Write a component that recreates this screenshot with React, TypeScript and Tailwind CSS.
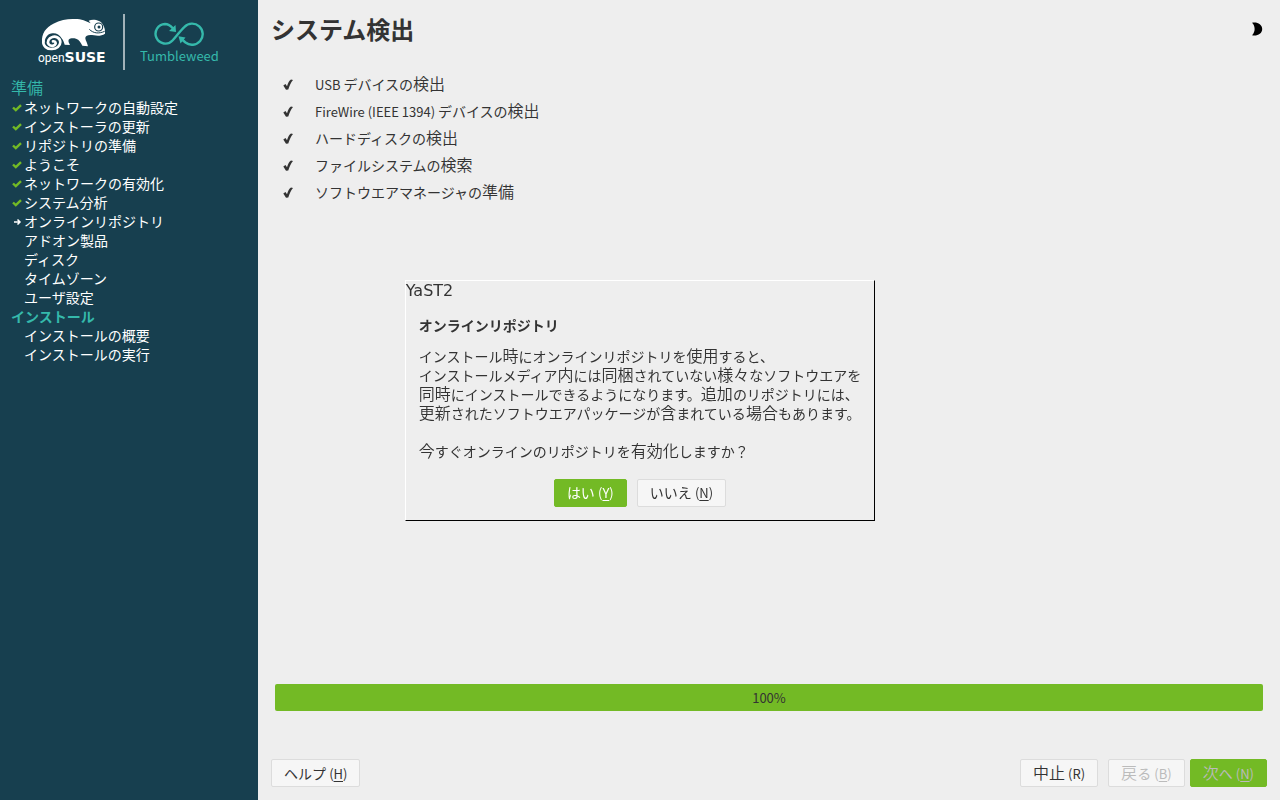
type StepState = "done" | "current" | "todo";

const preparation: { label: string; state: StepState }[] = [
  { label: "ネットワークの自動設定", state: "done" },
  { label: "インストーラの更新", state: "done" },
  { label: "リポジトリの準備", state: "done" },
  { label: "ようこそ", state: "done" },
  { label: "ネットワークの有効化", state: "done" },
  { label: "システム分析", state: "done" },
  { label: "オンラインリポジトリ", state: "current" },
  { label: "アドオン製品", state: "todo" },
  { label: "ディスク", state: "todo" },
  { label: "タイムゾーン", state: "todo" },
  { label: "ユーザ設定", state: "todo" },
];

const installation: { label: string; state: StepState }[] = [
  { label: "インストールの概要", state: "todo" },
  { label: "インストールの実行", state: "todo" },
];

const probes = [
  "USB デバイスの検出",
  "FireWire (IEEE 1394) デバイスの検出",
  "ハードディスクの検出",
  "ファイルシステムの検索",
  "ソフトウエアマネージャの準備",
];

const message = [
  "インストール時にオンラインリポジトリを使用すると、",
  "インストールメディア内には同梱されていない様々なソフトウエアを",
  "同時にインストールできるようになります。追加のリポジトリには、",
  "更新されたソフトウエアパッケージが含まれている場合もあります。",
  "",
  "今すぐオンラインのリポジトリを有効化しますか？",
];

/** Sets kanji a size larger, and Latin text a size smaller, than the kana around them. */
function Mixed({ text }: { text: string }) {
  return (
    <>
      {text.split(/([\u3005\u4e00-\u9fff]+|[ -~]+)/).map((part, i) =>
        i % 2 ? (
          <span
            key={i}
            className={/^[ -~]/.test(part) ? "text-[13px] leading-none" : "text-base leading-none font-[350]"}
          >
            {part}
          </span>
        ) : (
          part
        ),
      )}
    </>
  );
}

function StepIcon({ state }: { state: StepState }) {
  if (state === "done") {
    return (
      <svg viewBox="0 0 10 8" className="h-2 w-2.5" aria-hidden="true">
        <path d="M1 3.5 3.8 6.200 9 1.2" fill="none" stroke="#73ba25" strokeWidth="2.4" />
      </svg>
    );
  }
  if (state === "current") {
    return (
      <svg viewBox="0 0 10 8" className="h-2 w-2.5" aria-hidden="true">
        <path d="M2 4H8M5.5 1.5 8 4 5.5 6.5" fill="none" stroke="#fff" strokeWidth="1.5" />
      </svg>
    );
  }
  return null;
}

function Steps({ items }: { items: { label: string; state: StepState }[] }) {
  return (
    <ul className="text-white">
      {items.map((s) => (
        <li key={s.label} className="flex h-[19px] items-center">
          <span className="flex w-3.5 shrink-0 justify-center">
            <StepIcon state={s.state} />
          </span>
          {s.label}
        </li>
      ))}
    </ul>
  );
}

function Button({
  label,
  hotkey,
  underlined = true,
  primary = false,
  disabled = false,
}: {
  label: string;
  hotkey: string;
  underlined?: boolean;
  primary?: boolean;
  disabled?: boolean;
}) {
  const tone = primary
    ? disabled
      ? "border-[#73ba25] bg-[#73ba25] text-[#bbb]"
      : "border-[#73ba25] bg-[#73ba25] text-white"
    : disabled
      ? "border-[#dcdcdc] bg-[#f6f6f6] text-[#bbb]"
      : "border-[#dcdcdc] bg-[#f6f6f6] text-[#333]";
  return (
    <button
      type="button"
      disabled={disabled}
      className={`flex h-7 items-center rounded-[2px] border px-3 whitespace-pre ${tone}`}
    >
      <span>
        <Mixed text={label} />{" "}
        <span className="text-[13px]">
          (<span className={underlined ? "underline underline-offset-2" : ""}>{hotkey}</span>)
        </span>
      </span>
    </button>
  );
}

function Chameleon() {
  return (
    <svg viewBox="33 45 195 99" className="ml-[3px] h-[33px] w-[65px]" aria-hidden="true">
      <path
        fill="#fff"
        d="M36 118C34 90 48 74 70 62C92 50 115 47 135 48C155 48 168 54 182 61L176 53C190 47 212 52 218 64C224 72 226 84 225 92C215 99 203 99 192 97C176 94 168 97 166 104C166 112 171 116 174 130L157 128C152 118 148 110 138 107C128 105 120 106 116 110C114 115 117 119 120 126L104 125C102 118 100 112 96 107C88 94 78 90 68 91C54 92 45 102 44 118Z"
      />
      <path
        fill="none"
        stroke="#fff"
        strokeWidth="8"
        strokeLinecap="round"
        d="M40 114C38 130 52 139 66 138C80 138 91 129 91 117C90 104 77 99 67 102C55 105 51 117 56 124C61 131 75 130 77 121C77 116 73 114 69 115"
      />
      <circle cx="206" cy="72" r="12" fill="none" stroke="#173f4f" strokeWidth="3.5" />
      <circle cx="207" cy="72" r="4.5" fill="#173f4f" />
      <path d="M178 79C190 91 206 93 224 85" fill="none" stroke="#173f4f" strokeWidth="3" />
    </svg>
  );
}

function Logo() {
  return (
    <div className="flex h-[79px] pt-3.5 pl-[38px] text-white">
      <div className="w-[85px] pt-1">
        <Chameleon />
        <p className="flex h-3 items-baseline">
          <span className="font-[Roboto] text-xs leading-3">open</span>
          <span className="font-['DejaVu_Sans'] text-sm leading-3 font-bold">SUSE</span>
        </p>
      </div>
      <div className="h-14 w-0.5 bg-[#a2b2b9]" />
      <div className="pl-[15px] text-[#35b9ab]">
        <svg viewBox="0 0 50 24" className="mx-auto mt-2 h-6 w-[50px]" aria-hidden="true">
          <path
            fill="none"
            stroke="currentColor"
            strokeWidth="2.4"
            d="M19 6.500C16 3 13 2 11 2A9.800 9.800 0 1 0 18.500 18.500C23 13.500 26 9 30.500 4.800A10.600 10.600 0 1 1 31.500 20.500L28 17.500"
          />
          <path fill="currentColor" d="M22 10 21.500 3 15 9ZM24.500 14.300 31.500 15.500 26.500 21.500Z" />
        </svg>
        <p className="text-[13px] leading-5">Tumbleweed</p>
      </div>
    </div>
  );
}

export default function App() {
  return (
    <div className="flex min-h-screen bg-[#eee] font-['Noto_Sans_CJK_JP',sans-serif] text-sm leading-[19px] text-[#333]">
      <aside className="w-[258px] shrink-0 bg-[#173f4f]">
        <Logo />
        <nav className="pl-2.5">
          <h2 className="h-[19px] pl-px text-[#35b9ab]">
            <Mixed text="準備" />
          </h2>
          <Steps items={preparation} />
          <h2 className="h-[19px] pl-px font-bold text-[#35b9ab]">インストール</h2>
          <Steps items={installation} />
        </nav>
      </aside>

      <main className="flex min-w-0 flex-1 flex-col px-[13px] pb-[13px]">
        <header className="flex h-[58px] items-center justify-between pr-1">
          <h1 className="text-2xl font-bold">システム検出</h1>
          <button type="button" aria-label="テーマの切り替え">
            <svg viewBox="0 0 12 14" className="h-3.5 w-3" aria-hidden="true">
              <path d="M1 .8C5.500-.6 11.200 2 11.200 7S5.500 14.600 1 13.200C4.500 10 4.500 4 1 .8Z" fill="#000" />
            </svg>
          </button>
        </header>

        <ul className="mt-[13px] pl-3">
          {probes.map((p) => (
            <li key={p} className="flex h-[27px] items-center">
              <svg viewBox="0 0 10 11" className="mr-[22px] h-[11px] w-2.5" aria-hidden="true">
                <path d="M.3 6.500 2.500 5 4 7.200C5 4 6.200 1.500 8 .5L10 1C7.800 3.500 6.300 7 5.300 10.500L3 10.800Z" fill="#333" />
              </svg>
              <span>
                <Mixed text={p} />
              </span>
            </li>
          ))}
        </ul>

        <div
          role="progressbar"
          aria-valuenow={100}
          className="mx-1 mt-auto flex h-[27px] items-center justify-center rounded-[2px] bg-[#73ba25] text-[13px]"
        >
          100%
        </div>

        <footer className="mt-12 flex">
          <Button label="ヘルプ" hotkey="H" />
          <div className="ml-auto flex">
            <Button label="中止" hotkey="R" underlined={false} />
            <div className="ml-2.5 flex gap-[5px]">
              <Button label="戻る" hotkey="B" disabled />
              <Button label="次へ" hotkey="N" primary disabled />
            </div>
          </div>
        </footer>
      </main>

      <div className="fixed inset-0 flex items-center justify-center">
        <section
          role="dialog"
          aria-labelledby="dialog-title"
          className="border border-t-white border-r-black border-b-black border-l-white bg-[#eee]"
        >
          <p className="font-['DejaVu_Sans'] text-base leading-[19px]">YaST2</p>
          <div className="px-[13px] pt-4 pb-[13px]">
            <h2 id="dialog-title" className="font-bold">
              オンラインリポジトリ
            </h2>
            <div className="mt-3">
              {message.map((line, i) => (
                <p key={i} className="h-[19px] whitespace-nowrap">
                  <Mixed text={line} />
                </p>
              ))}
            </div>
            <div className="mt-[18px] flex justify-center gap-2.5">
              <Button label="はい" hotkey="Y" primary />
              <Button label="いいえ" hotkey="N" />
            </div>
          </div>
        </section>
      </div>
    </div>
  );
}
